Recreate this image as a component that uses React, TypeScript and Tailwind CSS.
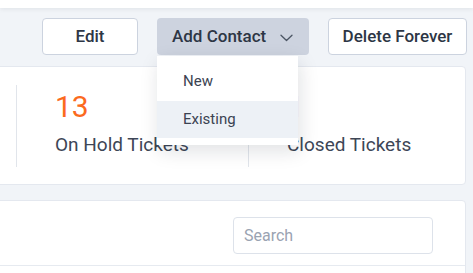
import React from "react";

function Chevron() {
  return (
    <svg width="13" height="8" viewBox="0 0 13 8" fill="none" className="ml-[14px] mt-[2px]">
      <path d="M1 1.2 L6.5 6.5 L12 1.2" stroke="#4b5563" strokeWidth="1.3" strokeLinecap="round" strokeLinejoin="round" />
    </svg>
  );
}

export default function App() {
  return (
    <div
      className="w-[473px] h-[273px] overflow-hidden bg-[#f1f4f8] text-[#374151]"
      style={{ fontFamily: "Roboto, 'Noto Sans', sans-serif" }}
    >
      <div className="h-[8px] bg-white shadow-[0_1px_5px_rgba(15,23,42,0.08)] relative z-10" />

      <div className="flex justify-end gap-[19px] pt-[10px] pr-[6px] relative z-20">
        <button className="w-[96px] h-[37px] rounded-[4px] border border-[#ccd3df] bg-white text-[17px] font-medium text-[#2d3645] flex items-center justify-center">
          Edit
        </button>
        <div className="relative">
          <button className="w-[152px] h-[37px] rounded-[4px] bg-[#cdd3df] text-[17px] font-medium text-[#2d3645] flex items-center pl-[15px]">
            Add Contact
            <Chevron />
          </button>
          <div className="absolute left-0 top-[38px] w-[141px] bg-white shadow-[2px_6px_18px_rgba(15,23,42,0.13)] pb-[7px]">
            <div className="h-[45px] flex items-center pl-[26px] pt-[5px] text-[15px] text-[#3b4352]">New</div>
            <div className="h-[37px] flex items-center pl-[26px] bg-[#edf1f6] text-[15px] text-[#3b4352]">Existing</div>
          </div>
        </div>
        <button className="w-[139px] h-[37px] rounded-[4px] border border-[#ccd3df] bg-white text-[17px] font-medium text-[#2d3645] flex items-center justify-center">
          Delete Forever
        </button>
      </div>

      <div className="-ml-[10px] mr-[7px] mt-[11px] h-[119px] bg-white border border-[#e4e8ef] rounded-[4px] flex items-center">
        <div className="w-[25px] h-[82px]" />
        <div className="w-[232px] h-[82px] border-l border-[#e1e5eb] pl-[38px] flex flex-col">
          <div className="text-[30px] leading-[30px] text-[#fb6a1e] mt-[7px]">13</div>
          <div className="text-[19px] leading-[20px] mt-[13px] text-[#3d4656]">On Hold Tickets</div>
        </div>
        <div className="flex-1 h-[82px] border-l border-[#e1e5eb] pl-[38px] flex flex-col">
          <div className="text-[30px] leading-[30px] text-[#e879c9] mt-[7px]">1</div>
          <div className="text-[19px] leading-[20px] mt-[13px] text-[#3d4656]">Closed Tickets</div>
        </div>
      </div>

      <div className="-ml-[10px] mr-[7px] mt-[15px] h-[120px] bg-white border border-[#e4e8ef] rounded-[4px] flex flex-col">
        <div className="flex justify-end pt-[16px] pr-[32px] pb-[11px] border-b border-[#e6eaf0]">
          <div className="w-[200px] h-[37px] rounded-[4px] border border-[#dde2ea] flex items-center pl-[10px] text-[16px] text-[#9aa3b2]">
            Search
          </div>
        </div>
      </div>
    </div>
  );
}
